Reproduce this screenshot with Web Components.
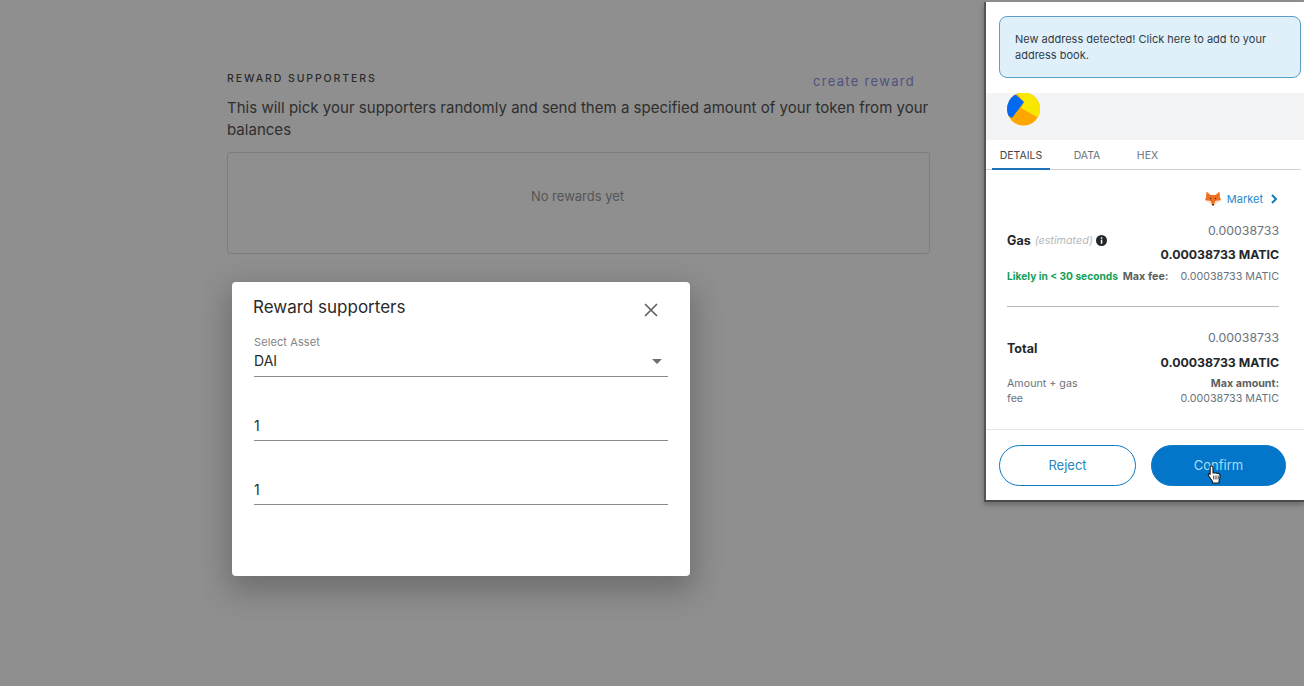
<!DOCTYPE html>
<html><head><meta charset="utf-8"><style>
html,body{margin:0;padding:0;height:100%;overflow:hidden}
body{background:#8f8f8f;font-family:"Inter","Liberation Sans",sans-serif}
</style></head><body>
<reward-page></reward-page>
<reward-dialog></reward-dialog>
<wallet-popup></wallet-popup>
<template id="tp"><style>
:host{display:block;width:703px;margin-left:227px;padding-top:72px;color:#262626;font-family:"Inter",sans-serif}
.head{display:flex;justify-content:space-between;align-items:flex-start;height:25px}
.t{font-size:10.5px;font-weight:500;letter-spacing:1.9px;line-height:14px;color:#2b2b2b}
.c{font-size:13px;letter-spacing:1.3px;color:#505280;line-height:18px;margin:0 15px 0 0}
p{margin:0;font-size:15px;line-height:22px;letter-spacing:.02px;color:#2e2e2e}
.box{margin-top:11px;border:1px solid #7d7d7d;border-radius:3px;display:flex;align-items:center;justify-content:center;font-size:13px;color:#555;padding:0 2px 14px 0;box-sizing:border-box;height:102px}
</style>
<div class="head"><span class="t">REWARD SUPPORTERS</span><span class="c">create reward</span></div>
<p>This will pick your supporters randomly and send them a specified amount of your token from your balances</p>
<div class="box">No rewards yet</div></template>
<template id="td"><style>
:host{display:block;position:absolute;left:232px;top:282px;width:458px;height:294px;background:#fff;border-radius:4px;box-shadow:0 11px 30px 4px rgba(0,0,0,.24);box-sizing:border-box;padding:14px 22px 0 22px;color:#2a2a2a;font-family:"Inter",sans-serif}
.h{display:flex;justify-content:space-between;align-items:flex-start;height:37px}
h2{margin:0 0 0 -1px;font-size:17px;font-weight:400;line-height:22px;letter-spacing:0}
svg.x{margin:7px 10px 0 0;display:block}
.lb{font-size:11px;color:#838383;line-height:14px;margin-top:1.500px;letter-spacing:.1px}
.sel{display:flex;justify-content:space-between;align-items:flex-end;height:21px;border-bottom:1px solid #8a8a8a;font-size:14px;padding-bottom:6px;box-sizing:content-box;line-height:19px}
.sel svg{margin:0 6px 6px 0}
.f{height:25px;margin-top:38px;border-bottom:1px solid #8a8a8a;font-size:14px;line-height:21px}
</style>
<div class="h"><h2>Reward supporters</h2><svg class="x" width="14" height="14" viewBox="0 0 14 14"><path d="M1 1l12 12M13 1L1 13" stroke="#5f5f5f" stroke-width="1.6" fill="none"/></svg></div>
<div class="lb">Select Asset</div>
<div class="sel"><span>DAI</span><svg width="10" height="5" viewBox="0 0 10 5"><path d="M0 0h10L5 5z" fill="#6f6f6f"/></svg></div>
<div class="f">1</div><div class="f">1</div></template>
<template id="tw"><style>
:host{display:block;position:absolute;left:984px;top:2px;width:320px;height:500px;background:#fff;border-left:2px solid #555;border-bottom:2px solid #4a4a4a;box-sizing:border-box;box-shadow:0 3px 5px rgba(0,0,0,.25);font-family:"Inter",sans-serif;color:#24272a;font-size:11px}
.alert{margin:14px 3px 0 13px;height:62px;background:#dff0fb;border:1.5px solid #5a9fc4;border-radius:8px;box-sizing:border-box;padding:14px 15px;font-size:11px;line-height:16px;color:#2f3c44}
.ic{margin-top:15px;height:47px;background:#f2f4f6;padding-left:21px;box-sizing:border-box}
.ic svg{display:block;margin-left:-1px}
.tabs{display:flex;height:30px;margin-right:3px;border-bottom:1px solid #cfd2d4;box-sizing:border-box;font-size:10.500px;color:#6a737d;line-height:31px}
.tabs span{display:block;text-align:center}
.tabs .a{width:58px;margin-left:6px;color:#444;border-bottom:2px solid #1d72b8;height:30px;box-sizing:border-box}
.tabs .d{width:74px}.tabs .e{width:47px}
.body{padding:0 25px 0 21px}
.mk{display:flex;justify-content:flex-end;align-items:center;gap:8px;height:20px;margin-top:19px;color:#1f88c9;font-size:11px;padding-right:1px}
.n{text-align:right;font-size:12.300px;color:#6a737d;line-height:18px;padding-top:1px}
.b{text-align:right;font-size:12.300px;font-weight:700;color:#24272a;line-height:18px}
.gas{position:relative;height:51px;margin-top:12px}
.gas .b{margin-top:6px}
.lab{font-size:12.500px;font-weight:700;position:absolute;left:0;top:12px;display:flex;align-items:center;gap:4px}
.lab i{font-size:10.800px;font-weight:400;color:#b4b9be}
.lab svg{margin-left:-1px}
.l3{display:flex;justify-content:space-between;align-items:center;margin-top:-4px;height:16px;font-size:10.200px}
.g{color:#14a05a;font-weight:700}.m{color:#5c5f62;font-weight:700;font-size:10.800px;margin-left:2px}.v{color:#6a737d;font-size:10.700px}
hr{border:0;border-top:1px solid #b7bbbe;margin:22px 0 0}
.tot{position:relative;height:52px;margin-top:21px}
.tot .b{margin-top:7px}
.tot .lab{top:13px}
.l4{display:flex;justify-content:space-between;font-size:10.700px;line-height:15px;color:#6a737d;margin-top:-4px}
.l4 .rt{text-align:right}.l4 b{color:#5c5f62}
.foot{position:absolute;left:0;right:0;top:427px;border-top:1px solid #e4e6e8;padding:15px 18px 0 13px;display:flex;gap:15px}
.btn{height:41px;border-radius:21px;box-sizing:border-box;display:flex;align-items:center;justify-content:center;font-size:13px;border:1.500px solid #0e78c2;padding-bottom:2px}
.rej{width:137px;color:#2a84bd;background:#fff}.con{flex:1;color:#a9dcf7;background:#0376c9}
.cursor{position:absolute;left:221px;top:463px}
</style>
<div class="alert">New address detected! Click here to add to your address book.</div>
<div class="ic"><svg width="36" height="34" viewBox="0 0 36 34"><defs><clipPath id="c"><circle cx="17.500" cy="16" r="16.500"/></clipPath></defs><g clip-path="url(#c)"><rect width="36" height="34" fill="#ffa600"/><path d="M9 -2H36V27L31 24L15 15L18 9z" fill="#f8e800"/><path d="M9 1L18 9L6 25L-2 20V0z" fill="#0369f0"/></g></svg></div>
<div class="tabs"><span class="a">DETAILS</span><span class="d">DATA</span><span class="e">HEX</span></div>
<div class="body">
<div class="mk"><span style="display:flex;align-items:center;gap:6px"><svg width="16" height="16" viewBox="0 0 16 16"><path d="M1.500 .5L5.500 4h5l4-3.500.5 6 1 2.500-3.500 2L8 15l-4.500-4L0 9l1-2.500z" fill="#f0701f"/><path d="M1 9l4.500 1L8 15l-4.500-4zM15 9l-4.500 1L8 15l4.500-4z" fill="#ffe9d6"/><path d="M6.800 13h2.400L8 15z" fill="#3a2a20"/><circle cx="5.500" cy="7.500" r=".7" fill="#3a2a20"/><circle cx="10.500" cy="7.500" r=".7" fill="#3a2a20"/></svg>Market</span><svg width="7" height="10" viewBox="0 0 7 10"><path d="M1 1l4 4-4 4" stroke="#1a78b8" stroke-width="2" fill="none"/></svg></div>
<div class="gas"><div class="n">0.00038733</div><div class="b">0.00038733 MATIC</div>
<div class="lab">Gas <i>(estimated)</i><svg width="11" height="11" viewBox="0 0 11 11"><circle cx="5.500" cy="5.500" r="5.500" fill="#24272a"/><rect x="4.800" y="4.700" width="1.500" height="4" fill="#fff"/><rect x="4.800" y="2.300" width="1.500" height="1.500" fill="#fff"/></svg></div></div>
<div class="l3"><span><span class="g">Likely in &lt; 30 seconds</span> <span class="m">Max fee:</span></span><span class="v">0.00038733 MATIC</span></div>
<hr>
<div class="tot"><div class="n">0.00038733</div><div class="b">0.00038733 MATIC</div><div class="lab">Total</div></div>
<div class="l4"><div>Amount + gas<br>fee</div><div class="rt"><b>Max amount:</b><br>0.00038733 MATIC</div></div>
</div>
<div class="foot"><div class="btn rej">Reject</div><div class="btn con">Confirm</div></div>
<svg class="cursor" width="15" height="19" viewBox="0 0 15 19"><path d="M4.500 1c1 0 1.500.7 1.500 1.700v5.300h1.600c.6-.3 1.300-.2 1.600.2.600-.3 1.300-.1 1.500.3.800-.2 2 .3 2.300 1.300.3 2-.1 4.500-1 6.700v1.500H5.500v-1.500L1.700 11c-.9-1.200-.4-2.500.6-2.300l.8.600V2.700C3.100 1.700 3.500 1 4.500 1z" fill="#fff" stroke="#1b1b1b" stroke-width="1.200" stroke-linejoin="round"/><path d="M6.800 10.500v4M9 10.500v4M11.200 10.500v4" stroke="#1b1b1b" stroke-width=".9"/></svg></template>
<script>
for(const [n,t] of [['reward-page','tp'],['reward-dialog','td'],['wallet-popup','tw']]){
customElements.define(n,class extends HTMLElement{constructor(){super();this.attachShadow({mode:'open'}).appendChild(document.getElementById(t).content.cloneNode(true));}});
}
</script>
</body></html>
